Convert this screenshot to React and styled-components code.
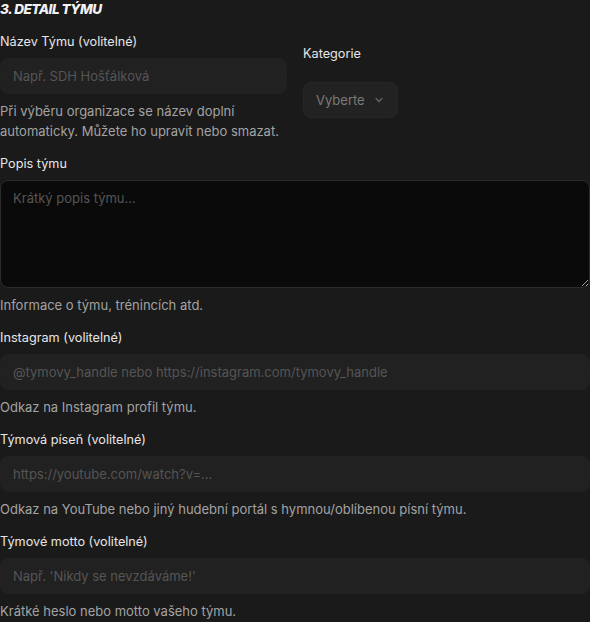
import React from "react";
import styled, { createGlobalStyle } from "styled-components";

const Global = createGlobalStyle`
  html, body { margin: 0; padding: 0; background: #1a1a1a; }
  body { font-family: Inter, "Noto Sans", sans-serif; color: #e5e5e5; }
  * { box-sizing: border-box; }
`;

const Section = styled.section`
  display: flex;
  flex-direction: column;
  gap: 13px;
`;

const Title = styled.h3`
  margin: 0;
  font-size: 13.5px;
  line-height: 19px;
  font-weight: 800;
  font-style: italic;
  letter-spacing: -0.5px;
  text-transform: uppercase;
  color: #f2f2f2;
`;

const Row = styled.div`
  display: grid;
  grid-template-columns: 1fr 1fr;
  gap: 16px;
  align-items: start;
`;

const Field = styled.div`
  display: flex;
  flex-direction: column;
  align-items: ${(p) => (p.$inline ? "flex-start" : "stretch")};
  padding-top: ${(p) => (p.$inline ? "12px" : "0")};
`;

const Label = styled.label`
  font-size: 12.7px;
  line-height: 20px;
  color: #e6e6e6;
  margin-bottom: ${(p) => p.$gap || 6}px;
`;

const Input = styled.input`
  height: 36px;
  width: 100%;
  border: 1px solid #212121;
  border-radius: 8px;
  background: #212121;
  padding: 0 12px;
  font-family: inherit;
  font-size: 13px;
  color: #e5e5e5;
  outline: none;
  &::placeholder { color: #555555; }
`;

const TextArea = styled.textarea`
  display: block;
  height: 108px;
  width: 100%;
  border: 1px solid #2b2b2b;
  border-radius: 8px;
  background: #0a0a0a;
  padding: 9px 12px;
  font-family: inherit;
  font-size: 13px;
  color: #e5e5e5;
  outline: none;
  resize: vertical;
  &::placeholder { color: #555555; }
`;

const Help = styled.p`
  margin: 7px 0 0;
  font-size: 13px;
  line-height: 20px;
  color: #a3a3a3;
`;

const SelectButton = styled.button`
  display: inline-flex;
  align-items: center;
  gap: 8px;
  height: 36px;
  padding: 0 12px;
  border: 1px solid #262626;
  border-radius: 8px;
  background: #222222;
  font-family: inherit;
  font-size: 13px;
  color: #7a7a7a;
`;

const Chevron = () => (
  <svg width="12" height="12" viewBox="0 0 24 24" fill="none" stroke="#666" strokeWidth="2.5" strokeLinecap="round" strokeLinejoin="round">
    <path d="m6 9 6 6 6-6" />
  </svg>
);

export default function App() {
  return (
    <>
      <Global />
      <Section>
        <Title>3. Detail týmu</Title>
        <Row>
          <Field>
            <Label>Název Týmu (volitelné)</Label>
            <Input placeholder="Např. SDH Hošťálková" />
            <Help>Při výběru organizace se název doplní automaticky. Můžete ho upravit nebo smazat.</Help>
          </Field>
          <Field $inline>
            <Label $gap={18}>Kategorie</Label>
            <SelectButton type="button">
              Vyberte <Chevron />
            </SelectButton>
          </Field>
        </Row>
        <Field>
          <Label>Popis týmu</Label>
          <TextArea placeholder="Krátký popis týmu..." />
          <Help>Informace o týmu, trénincích atd.</Help>
        </Field>
        <Field>
          <Label>Instagram (volitelné)</Label>
          <Input placeholder="@tymovy_handle nebo https://instagram.com/tymovy_handle" />
          <Help>Odkaz na Instagram profil týmu.</Help>
        </Field>
        <Field>
          <Label>Týmová píseň (volitelné)</Label>
          <Input placeholder="https://youtube.com/watch?v=..." />
          <Help>Odkaz na YouTube nebo jiný hudební portál s hymnou/oblíbenou písní týmu.</Help>
        </Field>
        <Field>
          <Label>Týmové motto (volitelné)</Label>
          <Input placeholder="Např. 'Nikdy se nevzdáváme!'" />
          <Help>Krátké heslo nebo motto vašeho týmu.</Help>
        </Field>
      </Section>
    </>
  );
}
